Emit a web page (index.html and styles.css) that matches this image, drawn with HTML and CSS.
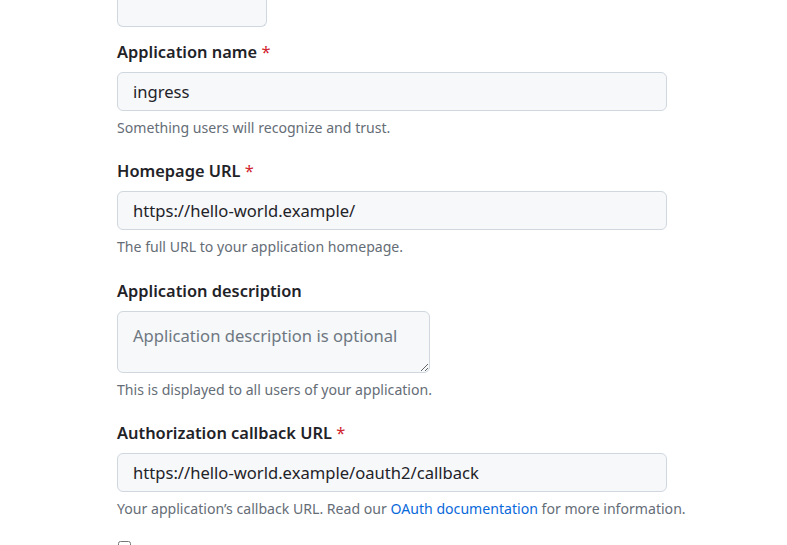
FILE: index.html
```html
<!DOCTYPE html>
<html lang="en">
<head>
<meta charset="utf-8">
<title>Register OAuth app</title>
<link rel="stylesheet" href="styles.css">
</head>
<body>
<form class="form">
  <div class="logo-box"></div>

  <div class="group">
    <label class="label">Application name <span class="req">*</span></label>
    <input class="input" type="text" value="ingress">
    <p class="hint">Something users will recognize and trust.</p>
  </div>

  <div class="group">
    <label class="label">Homepage URL <span class="req">*</span></label>
    <input class="input" type="text" value="https://hello-world.example/">
    <p class="hint">The full URL to your application homepage.</p>
  </div>

  <div class="group group-textarea">
    <label class="label">Application description</label>
    <textarea class="textarea" placeholder="Application description is optional"></textarea>
    <p class="hint">This is displayed to all users of your application.</p>
  </div>

  <div class="group">
    <label class="label">Authorization callback URL <span class="req">*</span></label>
    <input class="input" type="text" value="https://hello-world.example/oauth2/callback">
    <p class="hint">Your application’s callback URL. Read our <a class="link" href="#">OAuth documentation</a> for more information.</p>
  </div>

  <div class="check-row">
    <input class="check" type="checkbox">
  </div>
</form>
</body>
</html>
```

FILE: styles.css
```css
html, body {
  margin: 0;
  padding: 0;
  background: #ffffff;
}

body {
  font-family: "Noto Sans", "Open Sans", "Liberation Sans", sans-serif;
  color: #1f2328;
  overflow: hidden;
  height: 545px;
}

.form {
  padding-left: 117px;
  display: flex;
  flex-direction: column;
}

.logo-box {
  width: 148px;
  height: 26px;
  border: 1px solid #d0d7de;
  border-top: 0;
  border-radius: 0 0 6px 6px;
  background: #f6f8fa;
  margin-bottom: 14px;
}

.group {
  display: flex;
  flex-direction: column;
  align-items: flex-start;
  margin-bottom: 21px;
}

.group-textarea {
  margin-top: 1px;
}

.label {
  font-size: 16.4px;
  font-weight: 600;
  line-height: 22px;
  margin-bottom: 9px;
}

.req {
  color: #d1242f;
  font-weight: 400;
}

.input {
  box-sizing: border-box;
  width: 550px;
  height: 39px;
  margin: 0;
  padding: 0 15px;
  border: 1px solid #d0d7de;
  border-radius: 6px;
  background: #f6f8fa;
  font-family: inherit;
  font-size: 16.6px;
  color: #1f2328;
  outline: none;
}

.textarea {
  box-sizing: border-box;
  width: 313px;
  height: 62px;
  margin: 0;
  padding: 12px 15px;
  border: 1px solid #d0d7de;
  border-radius: 6px;
  background: #f6f8fa;
  font-family: inherit;
  font-size: 16.6px;
  line-height: 24px;
  color: #1f2328;
  outline: none;
  resize: both;
}

.textarea::placeholder {
  color: #6e7781;
}

.hint {
  margin: 6px 0 0;
  font-size: 14.1px;
  line-height: 22px;
  color: #656d76;
}

.link {
  color: #0969da;
  text-decoration: none;
}

.check-row {
  display: flex;
  align-items: flex-start;
  height: 20px;
}

.check {
  margin: 0 0 0 1px;
  width: 13px;
  height: 13px;
}
```
